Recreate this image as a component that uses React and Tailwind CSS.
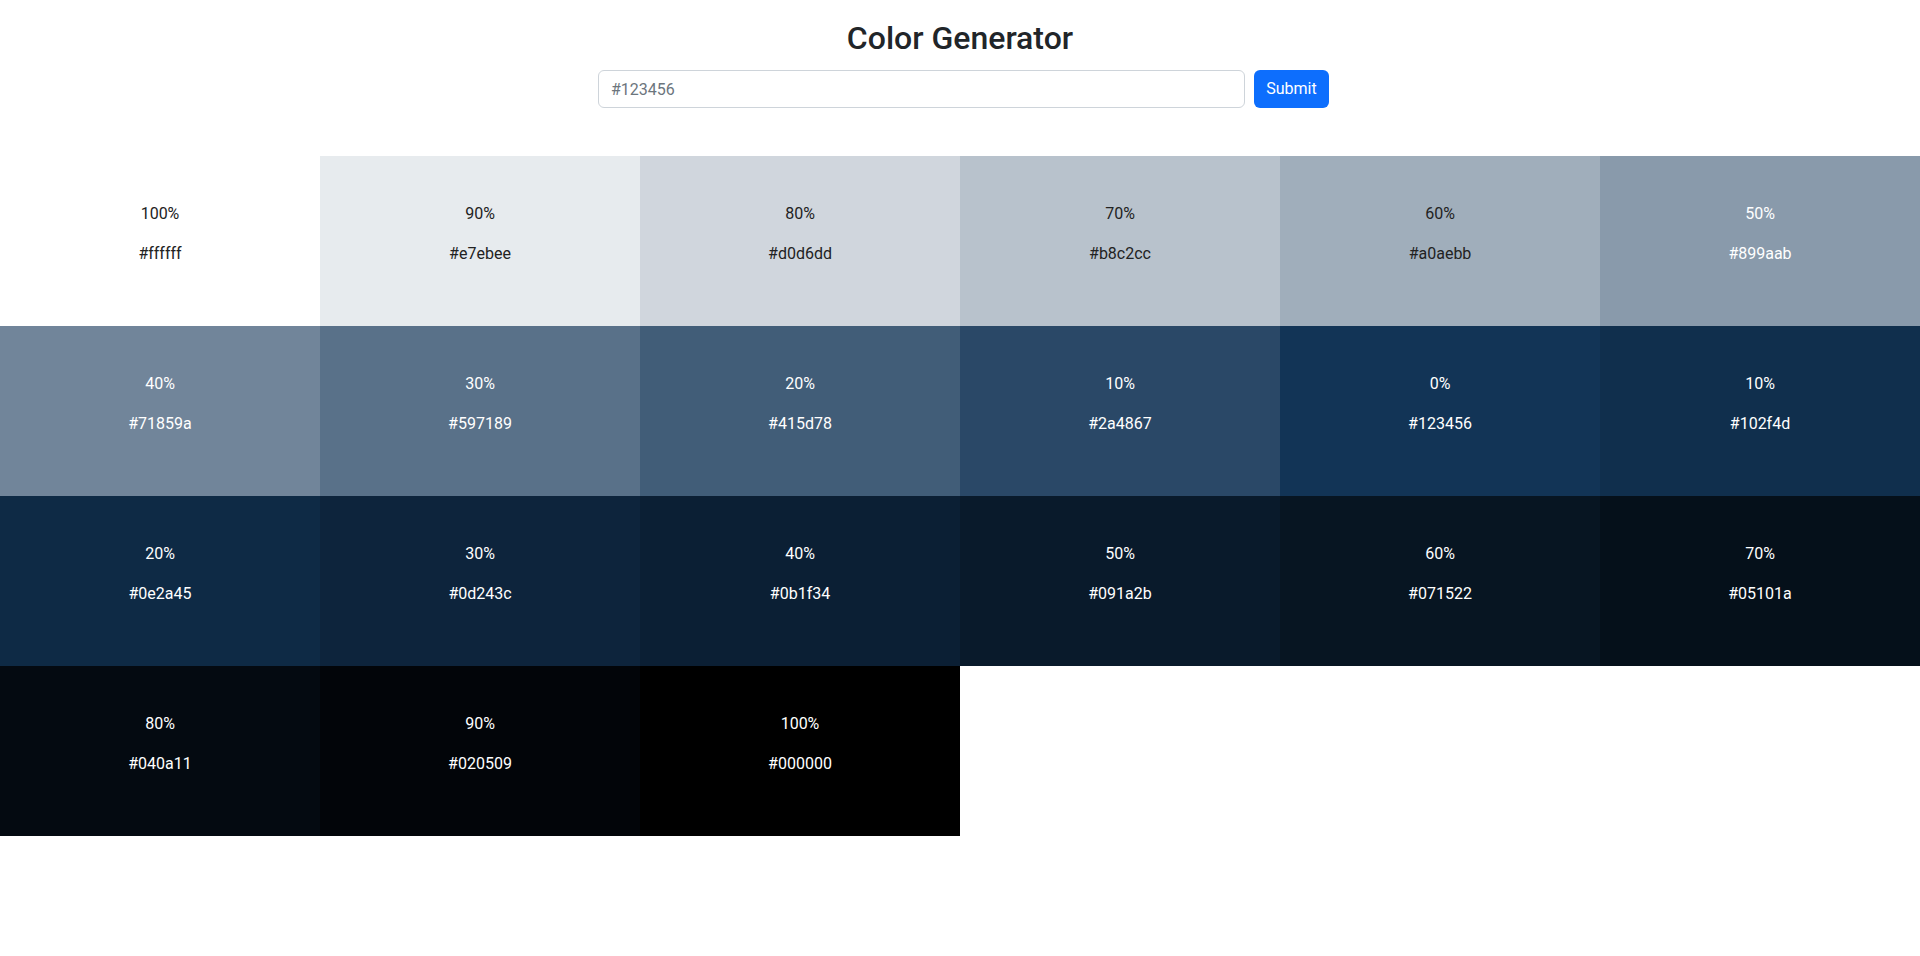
import { useState } from 'react';

const colors = [
  ['100%', 'ffffff'], ['90%', 'e7ebee'], ['80%', 'd0d6dd'], ['70%', 'b8c2cc'], ['60%', 'a0aebb'], ['50%', '899aab'],
  ['40%', '71859a'], ['30%', '597189'], ['20%', '415d78'], ['10%', '2a4867'], ['0%', '123456'], ['10%', '102f4d'],
  ['20%', '0e2a45'], ['30%', '0d243c'], ['40%', '0b1f34'], ['50%', '091a2b'], ['60%', '071522'], ['70%', '05101a'],
  ['80%', '040a11'], ['90%', '020509'], ['100%', '000000'],
];

export default function App() {
  const [color, setColor] = useState('');

  return (
    <div className="min-h-[956px] bg-white text-[#212529] font-['Roboto',sans-serif]">
      <section className="pt-[19px] flex flex-col items-center">
        <h2 className="text-[32px] leading-[1.2] font-medium">Color Generator</h2>
        <form className="mt-[13px] ml-[7px] flex gap-[9px]" onSubmit={(e) => e.preventDefault()}>
          <input
            type="text"
            value={color}
            onChange={(e) => setColor(e.target.value)}
            placeholder="#123456"
            className="w-[647px] h-[38px] px-3 rounded-[6px] border border-[#ced4da] text-base outline-none placeholder:text-[#6c757d]"
          />
          <button type="submit" className="w-[75px] h-[38px] rounded-[6px] bg-[#0d6efd] text-white text-base">
            Submit
          </button>
        </form>
      </section>

      <section className="mt-[48px] grid grid-cols-6">
        {colors.map(([weight, hex], idx) => (
          <article
            key={idx}
            className={`h-[170px] pt-[2px] flex flex-col items-center justify-center text-base leading-6 ${idx >= 5 ? 'text-white' : 'text-[#222]'}`}
            style={{ backgroundColor: `#${hex}` }}
          >
            <p className="mb-4">{weight}</p>
            <p className="mb-4">#{hex}</p>
          </article>
        ))}
      </section>
    </div>
  );
}
